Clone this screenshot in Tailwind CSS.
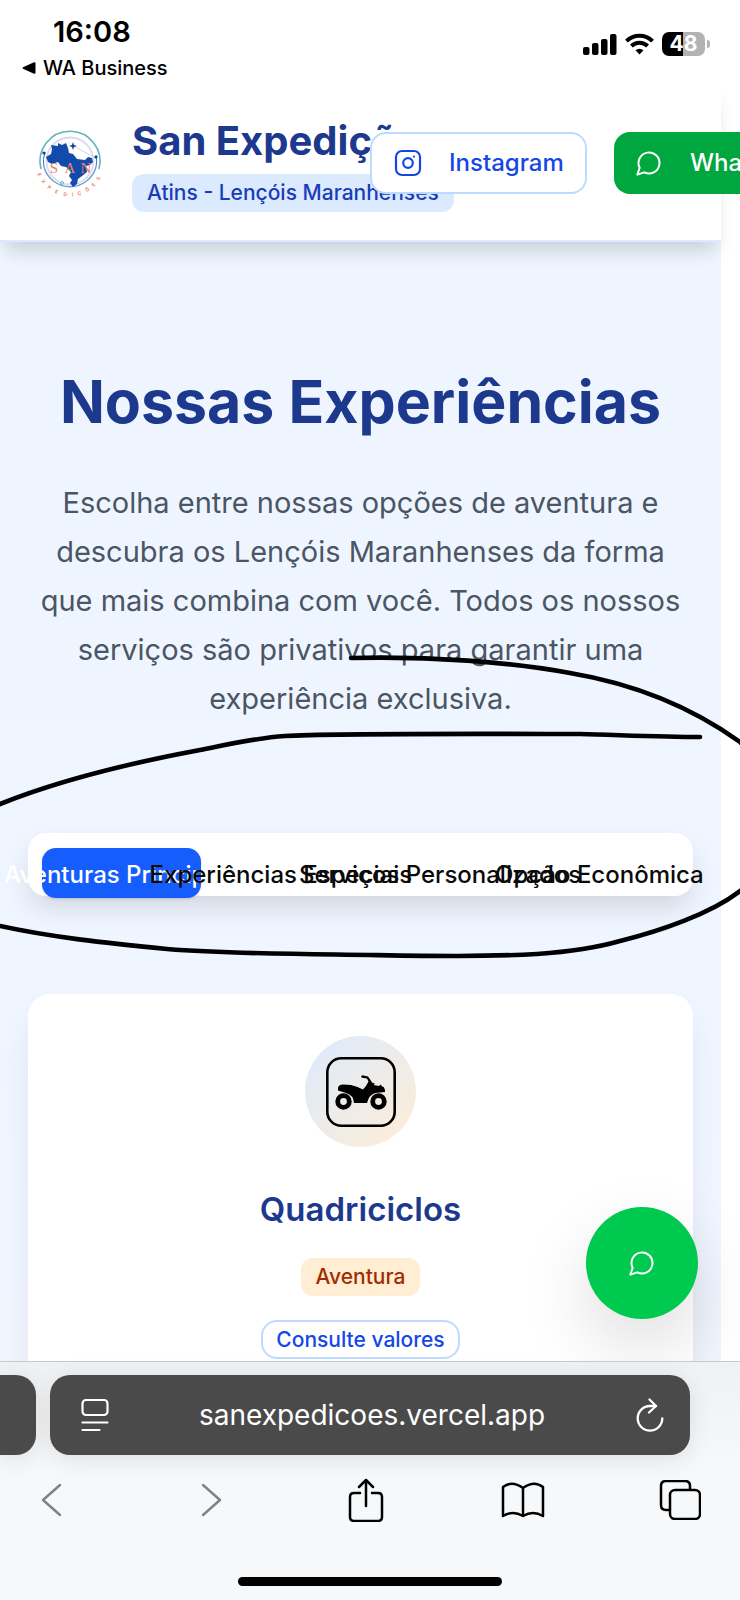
<!DOCTYPE html>
<html lang="pt-BR">
<head>
<meta charset="utf-8">
<meta name="viewport" content="width=device-width, initial-scale=1">
<title>San Expedições</title>
<script src="https://cdn.jsdelivr.net/npm/@tailwindcss/browser@4"></script>
</head>
<body class="bg-white font-['Inter',sans-serif]">
<div class="relative flex h-screen flex-col overflow-hidden bg-white">

  <!-- Status bar -->
  <div class="flex shrink-0 justify-between pt-4 pr-[30px] pl-[22px] text-black">
    <div>
      <div class="pl-[31px] text-[29px] leading-8 font-semibold">16:08</div>
      <a href="#" class="mt-1 flex items-center gap-[7px] text-[20px] leading-8 font-medium">
        <svg class="h-3 w-[14px]" viewBox="0 0 14 12" aria-hidden="true"><path d="M1 5.2 12 .3Q13.500 0 13.500 1.500v9Q13.500 12 12 11.700L1 6.800Q0 6 1 5.200Z"/></svg>
        WA Business
      </a>
    </div>
    <div class="mt-4 flex h-6 items-center gap-2">
      <svg class="h-[22px] w-[35px]" viewBox="0 0 35 22" aria-hidden="true"><rect x="1" y="14" width="6.500" height="8" rx="2"/><rect x="10" y="10" width="6.500" height="12" rx="2"/><rect x="19" y="6" width="6.500" height="16" rx="2"/><rect x="28" y="1" width="6.500" height="21" rx="2"/></svg>
      <svg class="h-[22px] w-[29px]" viewBox="0 0 29 22" fill="none" stroke="#000" stroke-width="4" aria-hidden="true"><path d="M1.500 8.200a18.500 18.500 0 0 1 26 0"/><path d="M6.400 13a11.600 11.600 0 0 1 16.200 0"/><path d="M10.500 17.300a5.800 5.800 0 0 1 8 0l-4 4.200Z" fill="#000" stroke="none"/></svg>
      <div class="flex items-center gap-[2px]">
        <div class="flex h-6 w-[43px] items-center justify-center rounded-[7px] bg-linear-to-r from-black from-48% to-[#b3b3b3] to-48% text-[21px] leading-6 font-bold text-white">48</div>
        <div class="h-2 w-[3px] rounded-r-full bg-[#b3b3b3]"></div>
      </div>
    </div>
  </div>

  <!-- Web page -->
  <div class="relative mr-[19px] min-h-0 flex-1">
    <header class="relative z-10 flex h-[158px] items-center border-b-2 border-blue-100 bg-white pt-px pl-[38px] shadow-[0_14px_18px_-6px_rgb(0_0_0/0.16)]">
      <svg class="mr-[28px] h-[66px] w-[66px] shrink-0 overflow-visible" viewBox="0 0 66 66" role="img" aria-label="San Expedições">
        <g fill="none">
          <path d="M3 39A30 30 0 1 1 61 39" stroke="#5eb5bf" stroke-width="1.600"/>
          <path d="M6 37A27 27 0 0 0 58 37" stroke="#6f9fd8" stroke-width="1.400"/>
          <path d="M6 37A27 27 0 0 1 7 22M58 37A27 27 0 0 0 58 25" stroke="#456db8" stroke-width="1"/>
          <circle cx="32" cy="31" r="23.500" stroke="#d9dcea" stroke-width="1.800"/>
          <path d="m35 16 23 12" stroke="#c7cde0" stroke-width=".8"/>
          <circle cx="24" cy="53" r="1.500" stroke="#65bfc4"/>
        </g>
        <path fill="#124bab" d="m20 13 4 2 4-2 2 5 1 5 4 1 4 5 8 1 3-3 4 1 1 4-3 3-4 1 1 6-5 4-4 3-1 5-4 3-3-4 2-3-3-4 2-4-5-5-5-1-3-4-6 2-4-2-2-5 5-3 1-5-1-4 7 1Z"/>
        <path fill="#173f8b" d="m35 12 1 3 3 1-3 1-1 3-1-3-3-1 3-1Z"/>
        <circle cx="6" cy="23" r="1.600" fill="#173f8b"/><circle cx="58" cy="27" r="1.600" fill="#173f8b"/>
        <g fill="#eb8066" text-anchor="middle" font-family="Liberation Serif, serif">
          <text x="16" y="43" font-size="15">S</text><text x="32" y="43" font-size="15">A</text><text x="48" y="43" font-size="15">N</text>
        </g>
        <path id="arc" d="M-1 43A35 35 0 0 0 65 43" fill="none"/>
        <text fill="#f08b70" font-size="5" font-weight="700" font-family="Inter, sans-serif"><textPath href="#arc" startOffset="1">E</textPath><textPath href="#arc" startOffset="9">X</textPath><textPath href="#arc" startOffset="18">P</textPath><textPath href="#arc" startOffset="27">E</textPath><textPath href="#arc" startOffset="36">D</textPath><textPath href="#arc" startOffset="45">I</textPath><textPath href="#arc" startOffset="51">Ç</textPath><textPath href="#arc" startOffset="60">Õ</textPath><textPath href="#arc" startOffset="69">E</textPath><textPath href="#arc" startOffset="77">S</textPath></text>
      </svg>
      <div class="flex w-[238px] shrink-0 flex-col items-start gap-2 pt-0.5 whitespace-nowrap">
        <div class="text-[40px] leading-[50px] font-bold text-blue-900">San Expedições</div>
        <div class="rounded-xl bg-blue-100 px-[15px] text-[21px] leading-[38px] font-medium text-blue-800">Atins - Lençóis Maranhenses</div>
      </div>
      <div class="relative flex shrink-0 gap-[27px] text-[24px] font-medium whitespace-nowrap">
        <a href="#" class="flex h-[62px] w-[217px] items-center gap-[27px] rounded-2xl border-2 border-blue-200 bg-white px-[22px] text-blue-700">
          <svg class="h-7 w-7 shrink-0" viewBox="0 0 28 28" fill="none" stroke="currentColor" stroke-width="2.200" aria-hidden="true"><rect x="2" y="2" width="24" height="24" rx="6"/><circle cx="14" cy="14" r="4.800"/><path d="M20 7.500v.1" stroke-linecap="round"/></svg>
          Instagram
        </a>
        <a href="#" class="flex h-[62px] items-center gap-[27px] rounded-2xl bg-[#00a63e] px-[21px] text-white">
          <svg class="h-7 w-7 shrink-0" viewBox="0 0 24 24" fill="none" stroke="currentColor" stroke-width="1.700" stroke-linecap="round" stroke-linejoin="round" aria-hidden="true"><path d="M7.900 20A9 9 0 1 0 4 16.100L2 22Z"/></svg>
          WhatsApp
        </a>
      </div>
    </header>

    <main class="h-full bg-linear-to-b from-[#eef5ff] to-[#f1f6ff] px-7 pt-[122px]">
      <h1 class="text-center text-[59px] leading-[76px] font-bold whitespace-nowrap text-blue-900">Nossas Experiências</h1>
      <p class="mt-[38px] text-center text-[29px] leading-[49px] whitespace-nowrap text-gray-600">Escolha entre nossas opções de aventura e<br>descubra os Lençóis Maranhenses da forma<br>que mais combina com você. Todos os nossos<br>serviços são privativos para garantir uma<br>experiência exclusiva.</p>

      <div role="tablist" class="mt-[110px] grid h-[63px] grid-cols-4 rounded-[18px] bg-white px-[14px] pt-[15px] text-[24px] font-medium whitespace-nowrap text-neutral-950 shadow-[0_14px_28px_-4px_rgb(0_0_0/0.14)]">
        <button role="tab" aria-selected="true" class="flex h-[50px] min-w-0 items-center justify-center rounded-[14px] bg-[#155dfc] pt-[3px] text-white shadow-sm">Aventuras Principais</button>
        <button role="tab" aria-selected="false" class="flex h-[50px] min-w-0 items-center justify-center pt-[3px]">Experiências Especiais</button>
        <button role="tab" aria-selected="false" class="flex h-[50px] min-w-0 items-center justify-center pt-[3px]">Serviços Personalizados</button>
        <button role="tab" aria-selected="false" class="flex h-[50px] min-w-0 items-center justify-center pt-[3px]">Opção Econômica</button>
      </div>

      <article class="mt-[98px] flex h-[520px] flex-col items-center rounded-[22px] bg-white pt-[42px] shadow-[0_20px_36px_-4px_rgb(0_0_0/0.08)]">
        <div class="flex h-[111px] w-[111px] items-center justify-center rounded-full bg-linear-to-br from-blue-100 to-orange-100">
          <svg class="h-[70px] w-[70px]" viewBox="0 0 70 70" role="img" aria-label="Quadriciclo">
            <rect x="1.300" y="1.300" width="67.400" height="67.400" rx="14" fill="none" stroke="#000" stroke-width="2.600"/>
            <g fill="none" stroke="#000" stroke-width="4.800"><circle cx="17.500" cy="44.500" r="5.800"/><circle cx="52.500" cy="44.500" r="5.800"/></g>
            <path d="M12 33.500v-3q1-3 5-3l8 .5q7 1.500 12 4.500l3-3.500 2.500-4.500-1.500-3-5-.8q-2-1.500.5-2.500l5.500 1.200 2.500 3.500 1.500 2.500 3 1.300-1.500 1.300 5.500 1 1.500-1.500 1.700 2 1.500.5q1.800 3 1.300 5l-10 1q-6 2-8 10H28q-.5-8-8-10Z"/>
          </svg>
        </div>
        <h2 class="mt-[38px] text-[33px] leading-[48px] font-semibold text-blue-900">Quadriciclos</h2>
        <div class="mt-[25px] rounded-xl bg-orange-100 px-[15px] text-[21px] leading-[38px] font-medium text-orange-800">Aventura</div>
        <div class="mt-6 rounded-2xl border-2 border-blue-200 px-[13px] text-[21px] leading-[35px] font-medium text-blue-700">Consulte valores</div>
      </article>
    </main>

    <!-- Floating contact button -->
    <button aria-label="WhatsApp" class="absolute right-[23px] bottom-[42px] flex h-[112px] w-[112px] items-center justify-center rounded-full bg-[#00c950] text-white shadow-[0_30px_70px_0_rgb(0_0_0/0.13)]">
      <svg class="h-7 w-7" viewBox="0 0 24 24" fill="none" stroke="currentColor" stroke-width="1.700" stroke-linecap="round" stroke-linejoin="round" aria-hidden="true"><path d="M7.900 20A9 9 0 1 0 4 16.100L2 22Z"/></svg>
    </button>
  </div>

  <!-- Browser controls -->
  <footer class="relative z-20 shrink-0 border-t border-[#c8cbcd] bg-linear-to-b from-[#f0f1f2] to-[#f6f8fa] to-45%">
    <div class="flex gap-[14px] pt-[13px] pr-[50px] text-white">
      <div class="h-20 w-9 shrink-0 rounded-r-[20px] bg-[#4a4a4b] shadow-[0_4px_24px_0_rgb(0_0_0/0.1)]"></div>
      <div class="flex h-20 flex-1 items-center justify-between rounded-[20px] bg-[#4a4a4b] pr-[25px] pl-[31px] shadow-[0_4px_24px_0_rgb(0_0_0/0.1)]">
        <button aria-label="Opções da página"><svg class="block h-[34px] w-7" viewBox="0 0 28 34" fill="none" stroke="currentColor" stroke-width="2.200" stroke-linecap="round"><rect x="1.500" y="2" width="25" height="15" rx="3.500"/><path d="M1.500 24.500h25M1.500 32h17"/></svg></button>
        <div class="text-[28px] leading-10">sanexpedicoes.vercel.app</div>
        <button aria-label="Recarregar"><svg class="block h-[34px] w-[30px]" viewBox="0 0 30 34" fill="none" stroke="currentColor" stroke-width="2.300" stroke-linecap="round" stroke-linejoin="round"><path d="M21 8H15a12.300 12.300 0 1 0 12.300 12.300"/><path d="m14.500 1.500 6.500 6.500-7 6.500"/></svg></button>
      </div>
    </div>
    <div class="-mr-[19px] -ml-[27px] mt-[21px] grid h-12 grid-cols-5 place-items-center text-black">
      <button aria-label="Voltar"><svg class="block h-9 w-7" viewBox="0 0 28 36" fill="none" stroke="#808183" stroke-width="2.400" stroke-linecap="round" stroke-linejoin="round"><path d="M22 3 5 18l17 15"/></svg></button>
      <button aria-label="Avançar"><svg class="block h-9 w-7" viewBox="0 0 28 36" fill="none" stroke="#808183" stroke-width="2.400" stroke-linecap="round" stroke-linejoin="round"><path d="m8 3 17 15L8 33"/></svg></button>
      <button aria-label="Compartilhar"><svg class="block h-11 w-9" viewBox="0 0 36 44" fill="none" stroke="currentColor" stroke-width="2.500" stroke-linecap="round" stroke-linejoin="round"><path d="M12 15H6q-4 0-4 4v20q0 4 4 4h24q4 0 4-4V19q0-4-4-4h-6M18 28V2m-7 7 7-7 7 7"/></svg></button>
      <button aria-label="Favoritos"><svg class="block h-9 w-[44px]" viewBox="0 0 44 36" fill="none" stroke="currentColor" stroke-width="2.500" stroke-linecap="round" stroke-linejoin="round"><path d="M22 6Q11-2 2 5v29q10-6 20 0 10-6 20 0V5Q33-2 22 6Zm0 0v28"/></svg></button>
      <button aria-label="Abas"><svg class="block h-10 w-[42px]" viewBox="0 0 42 40" fill="none" stroke="currentColor" stroke-width="2.500"><path d="M11 30H7q-5 0-5-5V6q0-5 5-5h19q5 0 5 5v4"/><rect x="11" y="10" width="30" height="29" rx="5"/></svg></button>
    </div>
    <div class="flex justify-center pt-[53px] pb-[14px]"><div class="h-[9px] w-[264px] rounded-full bg-black"></div></div>
  </footer>

  <!-- Hand-drawn loop around the tabs -->
  <svg class="pointer-events-none absolute inset-0 z-30 h-full w-full" viewBox="0 0 740 1600" fill="none" stroke="#000" stroke-width="4.600" stroke-linecap="round" stroke-linejoin="round" aria-hidden="true">
    <path d="M351 658C430 656 510 662 570 673C635 684 690 706 740 742C790 790 795 852 740 891C710 914 660 931 620 941C592 949 565 952 537 954C480 957 430 956 370 955C300 954 230 954 167 949C105 943 50 937 0 926C-70 910-80 837 0 804C60 780 130 763 200 750C230 744 255 738 285 736C330 733 530 734 580 734C620 735 660 737 700 737"/>
  </svg>
</div>
</body>
</html>
